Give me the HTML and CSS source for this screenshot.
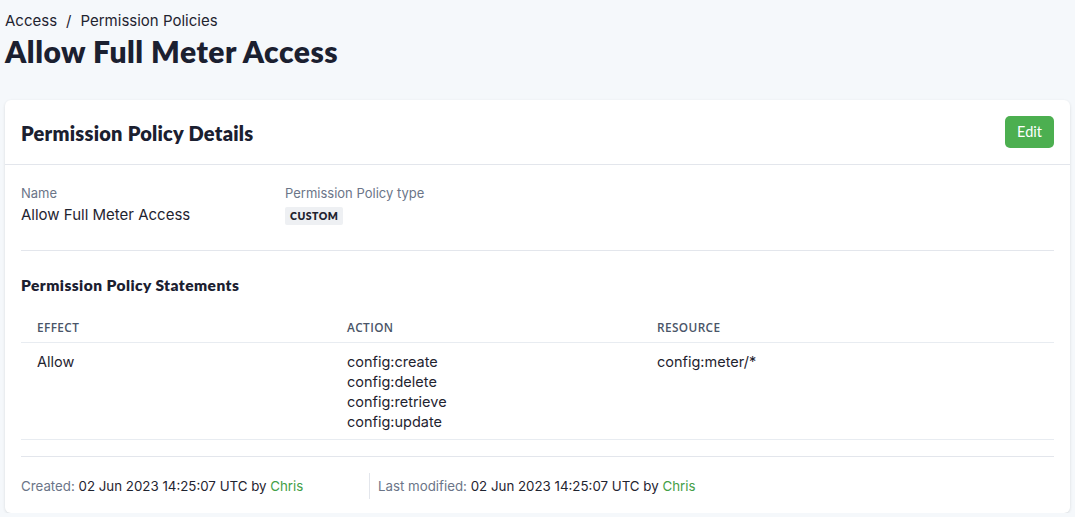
FILE: index.html
```html
<!DOCTYPE html>
<html>
<head>
<meta charset="utf-8">
<link rel="stylesheet" href="styles.css">
</head>
<body>
<div class="page">
  <div class="crumbs"><span>Access</span><span class="sep">/</span><span>Permission Policies</span></div>
  <h1 class="title">Allow Full Meter Access</h1>
  <div class="card">
    <div class="card-head">
      <h2>Permission Policy Details</h2>
      <button class="edit">Edit</button>
    </div>
    <div class="card-body">
      <div class="fields">
        <div class="field">
          <div class="label">Name</div>
          <div class="value">Allow Full Meter Access</div>
        </div>
        <div class="field">
          <div class="label">Permission Policy type</div>
          <div class="value"><span class="badge">CUSTOM</span></div>
        </div>
      </div>
      <h3>Permission Policy Statements</h3>
      <table class="stmts">
        <thead>
          <tr><th class="c1">Effect</th><th class="c2">Action</th><th>Resource</th></tr>
        </thead>
        <tbody>
          <tr>
            <td>Allow</td>
            <td>config:create<br>config:delete<br>config:retrieve<br>config:update</td>
            <td>config:meter/*</td>
          </tr>
        </tbody>
      </table>
      <div class="footer">
        <div class="meta"><span class="muted">Created:</span> 02 Jun 2023 14:25:07 UTC by <span class="user">Chris</span></div>
        <div class="meta second"><span class="muted">Last modified:</span> 02 Jun 2023 14:25:07 UTC by <span class="user">Chris</span></div>
      </div>
    </div>
  </div>
</div>
</body>
</html>
```
FILE: styles.css
```css
html, body {
  margin: 0;
  padding: 0;
  background: #f5f8fb;
  font-family: Inter, "Noto Sans", sans-serif;
  color: #1f2430;
}
.page {
  padding: 11px 5px 0 5px;
}
.crumbs {
  font-size: 15px;
  line-height: 20px;
  color: #1f2430;
  display: flex;
  gap: 9px;
}
.title {
  margin: 2px 0 0 0;
  font-family: Lato, sans-serif;
  font-weight: 800;
  font-size: 30px;
  letter-spacing: 0.5px;
  line-height: 36px;
  color: #1b2030;
}
.card {
  margin-top: 31px;
  background: #fff;
  border-radius: 6px;
  box-shadow: 0 1px 3px rgba(0,0,0,0.12);
  width: 1065px;
}
.card-head {
  height: 64px;
  border-bottom: 1px solid #e3e6ec;
  display: flex;
  align-items: center;
  justify-content: space-between;
  padding: 0 16px;
}
.card-head h2 {
  margin: 2px 0 0 0;
  font-family: Lato, sans-serif;
  font-weight: 800;
  font-size: 20px;
  letter-spacing: 0.25px;
  color: #1b2030;
}
.edit {
  background: #4caf50;
  color: #fff;
  border: none;
  border-radius: 5px;
  font-family: Lato, sans-serif;
  font-size: 14.5px;
  width: 49px;
  height: 32px;
  padding: 0;
  margin-bottom: 1px;
}
.card-body {
  padding: 0 16px;
}
.fields {
  display: flex;
  padding: 19px 0 22px;
  border-bottom: 1px solid #e3e6ec;
}
.field {
  width: 264px;
}
.label {
  font-size: 13px;
  line-height: 18px;
  color: #6b7588;
}
.value {
  font-size: 15px;
  line-height: 26px;
  color: #1f2430;
}
.badge {
  display: inline-block;
  background: #eef0f3;
  font-family: Lato, sans-serif;
  font-weight: 800;
  font-size: 10.5px;
  letter-spacing: 0.5px;
  padding: 0 5px;
  line-height: 18px;
  border-radius: 2px;
  color: #1f2430;
  vertical-align: middle;
}
h3 {
  margin: 24px 0 0 0;
  font-family: Lato, sans-serif;
  font-weight: 800;
  font-size: 15.5px;
  letter-spacing: 0.45px;
  line-height: 20px;
  color: #1b2030;
}
.stmts {
  margin-top: 24px;
  width: 100%;
  border-collapse: collapse;
  table-layout: fixed;
}
.stmts th {
  text-align: left;
  font-family: "Open Sans", sans-serif;
  font-weight: 600;
  font-size: 11.8px;
  letter-spacing: 0.4px;
  text-transform: uppercase;
  color: #4a5568;
  padding: 0 16px 7px;
  line-height: 16px;
  border-bottom: 1px solid #e8ecf1;
}
.stmts th.c1, .stmts th.c2 {
  width: 278px;
}
.stmts td {
  vertical-align: top;
  font-size: 14.5px;
  line-height: 20px;
  padding: 9px 16px 7px;
  border-bottom: 1px solid #e8ecf1;
  color: #1f2430;
}
.footer {
  margin-top: 16px;
  border-top: 1px solid #e3e6ec;
  display: flex;
  align-items: center;
  padding: 16px 0 14px;
}
.meta {
  font-size: 13.3px;
  line-height: 26px;
  width: 348px;
  color: #1f2430;
}
.meta.second {
  border-left: 1px solid #e3e6ec;
  padding-left: 8px;
  width: auto;
}
.muted { color: #6b7588; }
.user { color: #43a047; }
```
